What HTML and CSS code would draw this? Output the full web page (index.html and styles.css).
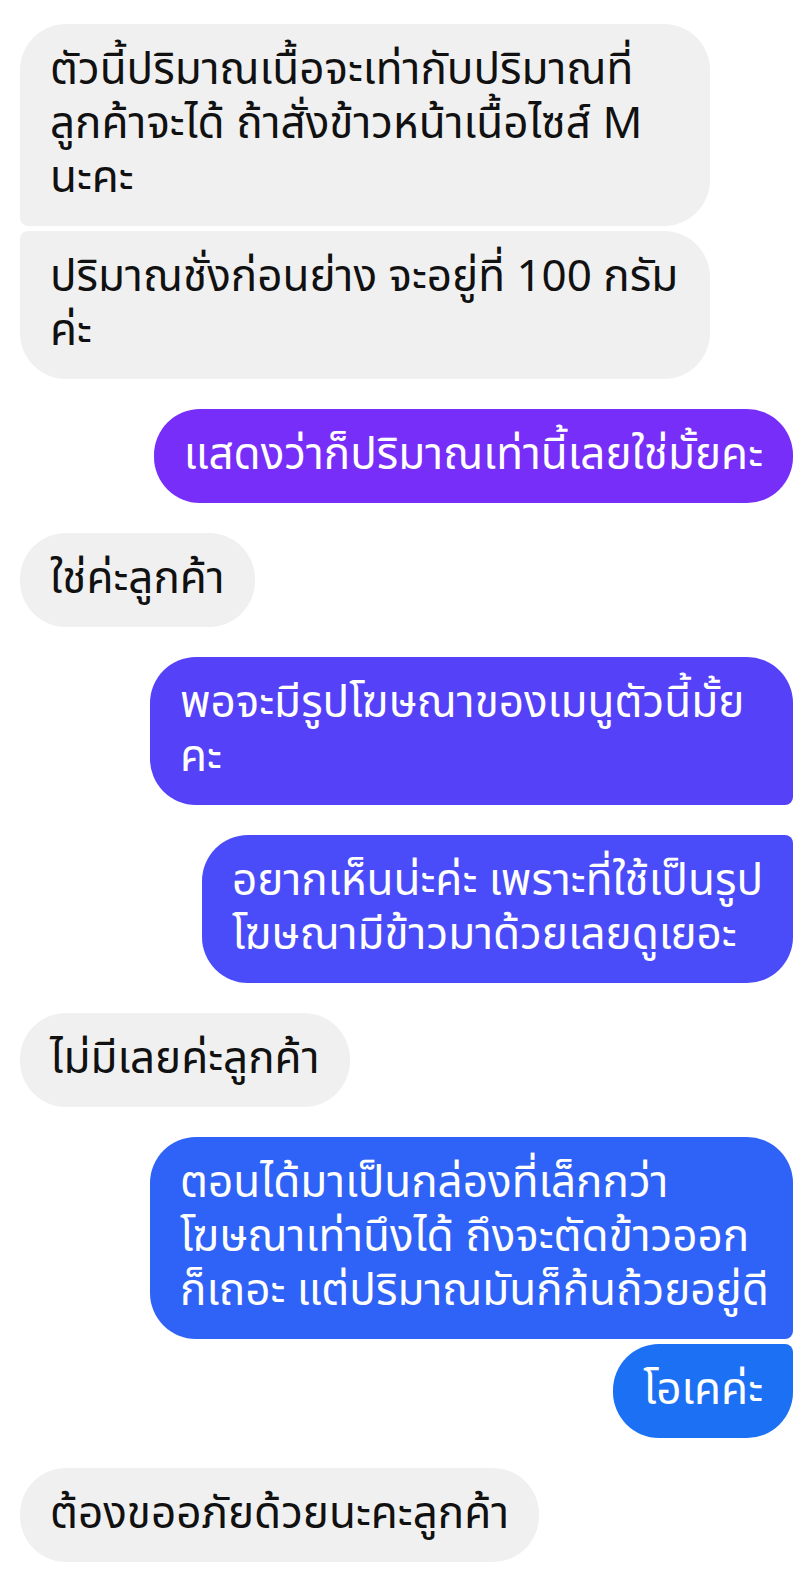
FILE: index.html
```html
<!DOCTYPE html>
<html lang="th">
<head>
    <meta charset="UTF-8">
    <meta name="viewport" content="width=device-width, initial-scale=1.0">
    <title>แชท</title>
    <link rel="stylesheet" href="styles.css">
</head>
<body>
    <div class="chat">
        <div class="msg in first wide">ตัวนี้ปริมาณเนื้อจะเท่ากับปริมาณที่<br>ลูกค้าจะได้ ถ้าสั่งข้าวหน้าเนื้อไซส์ M<br>นะคะ</div>
        <div class="msg in last grouped wide">ปริมาณชั่งก่อนย่าง จะอยู่ที่ 100 กรัม<br>ค่ะ</div>

        <div class="msg out c1">แสดงว่าก็ปริมาณเท่านี้เลยใช่มั้ยคะ</div>

        <div class="msg in">ใช่ค่ะลูกค้า</div>

        <div class="msg out c2 first wide">พอจะมีรูปโฆษณาของเมนูตัวนี้มั้ย<br>คะ</div>
        <div class="msg out c3 last">อยากเห็นน่ะค่ะ เพราะที่ใช้เป็นรูป<br>โฆษณามีข้าวมาด้วยเลยดูเยอะ</div>

        <div class="msg in">ไม่มีเลยค่ะลูกค้า</div>

        <div class="msg out c4 first wide">ตอนได้มาเป็นกล่องที่เล็กกว่า<br>โฆษณาเท่านึงได้ ถึงจะตัดข้าวออก<br>ก็เถอะ แต่ปริมาณมันก็ก้นถ้วยอยู่ดี</div>
        <div class="msg out c5 last grouped">โอเคค่ะ</div>

        <div class="msg in">ต้องขออภัยด้วยนะคะลูกค้า</div>
    </div>
</body>
</html>
```
FILE: styles.css
```css
body {
    margin: 0;
    background-color: #fff;
    font-family: "Noto Sans Thai", "Noto Sans", sans-serif;
}

.chat {
    display: flex;
    flex-direction: column;
    gap: 30px;
    padding: 24px 7px 20px 20px;
}

.msg {
    font-size: 44px;
    line-height: 54px;
    padding: 20px 30px;
    border-radius: 46px;
    width: fit-content;
    white-space: nowrap;
}

.msg.grouped {
    margin-top: -25px;
}

.in {
    align-self: flex-start;
    background-color: #f0f0f0;
    color: #111;
}

.in.wide {
    width: 630px;
}

.in.first {
    border-bottom-left-radius: 8px;
}

.in.last {
    border-top-left-radius: 8px;
}

.out {
    align-self: flex-end;
    color: #fff;
}

.out.wide {
    width: 583px;
}

.out.first {
    border-bottom-right-radius: 8px;
}

.out.last {
    border-top-right-radius: 8px;
}

.c1 { background-color: #772ef8; }
.c2 { background-color: #5441f8; }
.c3 { background-color: #4a4cfa; }
.c4 { background-color: #2f62f6; }
.c5 { background-color: #1b70f4; }
```
